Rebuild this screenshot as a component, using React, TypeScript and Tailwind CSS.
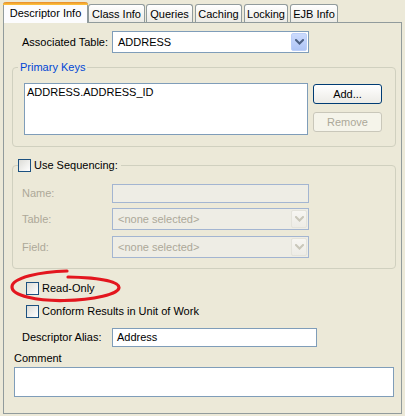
import React from "react";

const Chevron = ({ color }: { color: string }) => (
  <svg width="9" height="6" viewBox="0 0 9 6">
    <path d="M1 1 L4.5 4.5 L8 1" fill="none" stroke={color} strokeWidth="2" strokeLinecap="square" />
  </svg>
);

function Combo({ value, disabled }: { value: string; disabled?: boolean }) {
  return (
    <div
      className={`w-[197px] h-[22px] border flex items-stretch p-[1px] ${
        disabled ? "border-[#A3B5D1] bg-[#EEEDE5]" : "border-[#7F9DB9] bg-white"
      }`}
    >
      <span
        className={`flex-1 pl-[4px] flex items-center leading-[13px] ${
          disabled ? "text-[#ACA899]" : "text-black"
        }`}
      >
        {value}
      </span>
      <span
        className={`w-[16px] rounded-[2px] border flex items-center justify-center ${
          disabled
            ? "border-[#E4E3DB] bg-linear-to-b from-[#F7F6F2] to-[#EDECE6]"
            : "border-[#BCCFF9] bg-linear-to-b from-[#CCDBFD] to-[#AFC5F6]"
        }`}
      >
        <Chevron color={disabled ? "#C9C7BA" : "#4D6185"} />
      </span>
    </div>
  );
}

function Check() {
  return (
    <span className="w-[13px] h-[13px] border border-[#1C5180] bg-linear-to-br from-[#DCDCD7] to-white shrink-0" />
  );
}

function Tab({ label, w, ml }: { label: string; w: string; ml: string }) {
  return (
    <div
      className={`${w} ${ml} h-[18px] border border-b-0 border-[#919B9C] rounded-t-[3px] bg-linear-to-b from-white to-[#ECEBE5] flex justify-center pt-[3px] leading-[13px]`}
    >
      {label}
    </div>
  );
}

export default function App() {
  return (
    <div className="w-[405px] h-[416px] bg-[#ECE9D8] relative font-['Liberation_Sans',Arial,sans-serif] text-[11px] text-black overflow-hidden">
      {/* tab strip */}
      <div className="h-[22px] flex items-end pl-[3px]">
        <div className="relative z-10 w-[85px] h-[21px] -mb-px rounded-t-[3px] border-x border-[#919B9C] bg-[#FCFCFE] flex flex-col">
          <div className="h-[3px] -mx-px rounded-t-[3px] bg-linear-to-b from-[#E68B2C] to-[#FFC73C]" />
          <div className="flex justify-center pt-[2px] leading-[13px]">Descriptor Info</div>
        </div>
        <Tab label="Class Info" w="w-[57px]" ml="ml-[0px]" />
        <Tab label="Queries" w="w-[47px]" ml="ml-[1px]" />
        <Tab label="Caching" w="w-[47px]" ml="ml-[2px]" />
        <Tab label="Locking" w="w-[44px]" ml="ml-[2px]" />
        <Tab label="EJB Info" w="w-[48px]" ml="ml-[2px]" />
      </div>

      {/* panel */}
      <div className="mx-[3px] h-[392px] border border-[#919B9C] bg-[#ECE9D8] flex flex-col">
        {/* Associated table */}
        <div className="mt-[8px] pl-[18px] flex items-center">
          <span className="w-[90px] leading-[13px]">Associated Table:</span>
          <Combo value="ADDRESS" />
        </div>

        {/* Primary keys */}
        <fieldset className="mt-[8px] ml-[8px] w-[384px] h-[86px] border border-[#D0D0BF] rounded-[4px] flex">
          <legend className="ml-[5px] px-[2px] h-[13px] leading-[13px] text-[#0046D5]">Primary Keys</legend>
          <div className="pt-[9px] pl-[11px] flex gap-[5px]">
            <div className="w-[284px] h-[52px] border border-[#7F9DB9] bg-white pl-[2px] pt-[2px] leading-[13px]">
              ADDRESS.ADDRESS_ID
            </div>
            <div className="flex flex-col pt-[1px] gap-[8px]">
              <div className="w-[69px] h-[20px] rounded-[3px] border border-[#003C74] bg-linear-to-b from-white to-[#ECEBE6] flex items-center justify-center leading-[13px]">
                Add...
              </div>
              <div className="w-[69px] h-[20px] rounded-[3px] border border-[#C9C7BA] bg-[#F5F4EA] flex items-center justify-center leading-[13px] text-[#ACA899]">
                Remove
              </div>
            </div>
          </div>
        </fieldset>

        {/* Use sequencing */}
        <fieldset className="mt-[11px] ml-[8px] w-[384px] h-[111px] border border-[#D0D0BF] rounded-[4px] flex flex-col">
          <legend className="ml-[5px] pr-[3px] h-[14px] flex items-center gap-[3px] leading-[13px]">
            <Check />
            <span>Use Sequencing:</span>
          </legend>
          <div className="pt-[12px] pl-[9px] flex flex-col">
            <div className="flex items-center">
              <span className="w-[90px] leading-[13px] text-[#ACA899]">Name:</span>
              <div className="w-[197px] h-[19px] border border-[#A3B5D1] bg-[#EEEDE5]" />
            </div>
            <div className="mt-[5px] flex items-center">
              <span className="w-[90px] leading-[13px] text-[#ACA899]">Table:</span>
              <Combo value="<none selected>" disabled />
            </div>
            <div className="mt-[6px] flex items-center">
              <span className="w-[90px] leading-[13px] text-[#ACA899]">Field:</span>
              <Combo value="<none selected>" disabled />
            </div>
          </div>
        </fieldset>

        {/* checkboxes */}
        <div className="mt-[13px] pl-[22px] h-[13px] flex items-center gap-[3px] leading-[13px]">
          <Check />
          <span>Read-Only</span>
        </div>
        <div className="mt-[10px] pl-[22px] h-[13px] flex items-center gap-[3px] leading-[13px]">
          <Check />
          <span>Conform Results in Unit of Work</span>
        </div>

        {/* alias */}
        <div className="mt-[10px] pl-[18px] flex items-center">
          <span className="w-[90px] leading-[13px]">Descriptor Alias:</span>
          <div className="w-[205px] h-[19px] border border-[#7F9DB9] bg-white pl-[4px] flex items-center leading-[13px]">
            Address
          </div>
        </div>

        {/* comment */}
        <div className="mt-[5px] pl-[10px] leading-[13px]">Comment</div>
        <div className="mt-[2px] ml-[10px] w-[380px] h-[30px] border border-[#7F9DB9] bg-white" />
      </div>

      {/* red annotation ellipse */}
      <svg
        className="absolute left-0 top-0 pointer-events-none"
        width="405"
        height="416"
        viewBox="0 0 405 416"
      >
        <path
          d="M67 271 C40 271.5, 12 278, 12 287 C12 296, 38 301, 64 300.5 C94 300, 119 294, 119 287.5 C119 281, 96 277.5, 68 277"
          fill="none"
          stroke="#E3161E"
          strokeWidth="3.2"
          strokeLinecap="round"
        />
      </svg>
    </div>
  );
}
